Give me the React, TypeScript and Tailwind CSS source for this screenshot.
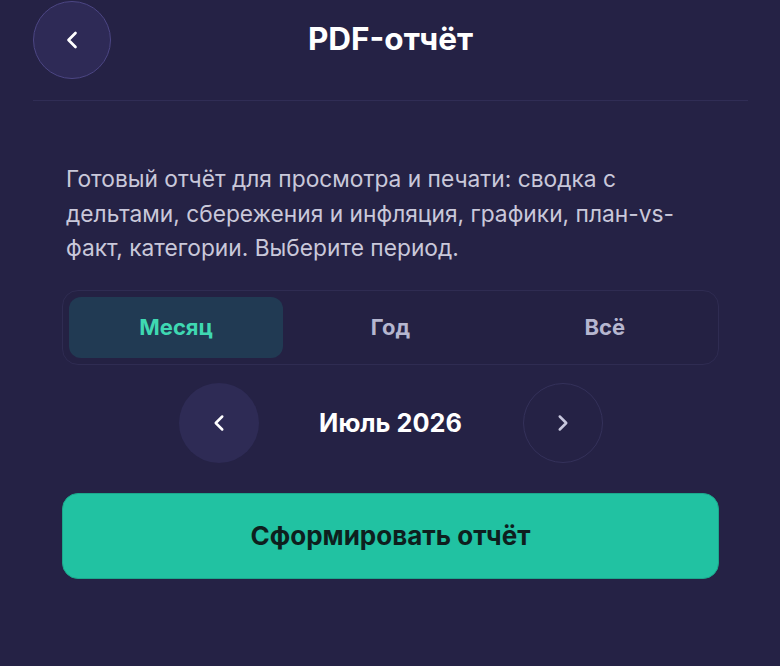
import { ChevronLeft, ChevronRight } from 'lucide-react'
import { useState } from 'react'

const periods = ['Месяц', 'Год', 'Всё']

export default function App() {
  const [period, setPeriod] = useState('Месяц')

  return (
    <div className="min-h-screen w-full bg-[#252245] font-['Inter','Noto_Sans',sans-serif]">
      <div className="mx-[33px] w-[715px]">
        {/* Header */}
        <header className="relative flex h-[101px] items-start justify-center border-b border-[#302d55]">
          <button
            type="button"
            className="absolute left-0 top-px flex h-[78px] w-[78px] items-center justify-center rounded-full border border-[#4c4684] bg-[#2e2a56] text-white"
          >
            <ChevronLeft size={28} strokeWidth={2.3} />
          </button>
          <h1 className="mt-[19px] text-[31.5px] font-bold leading-[40px] text-white">PDF-отчёт</h1>
        </header>

        <main className="px-[29px] pt-[61px]">
          <p className="pl-1 pr-6 text-[22.75px] leading-[34.5px] text-[#c9c8da]">
            Готовый отчёт для просмотра и печати: сводка с дельтами, сбережения и инфляция, графики, план-vs-факт,
            категории. Выберите период.
          </p>

          {/* Period tabs */}
          <div className="mt-[24px] grid grid-cols-3 rounded-2xl border border-[#2f2c52] bg-[#242143] px-[6px] py-[6px]">
            {periods.map((p) => (
              <button
                key={p}
                type="button"
                onClick={() => setPeriod(p)}
                className={
                  period === p
                    ? 'h-[61px] rounded-xl bg-[#213a53] text-[22px] font-bold text-[#3fd8b2]'
                    : 'h-[61px] rounded-xl text-[22px] font-bold text-[#b5b6cf]'
                }
              >
                {p}
              </button>
            ))}
          </div>

          {/* Month switcher */}
          <div className="mt-[18px] flex items-center justify-center">
            <button
              type="button"
              className="flex h-[80px] w-[80px] items-center justify-center rounded-full bg-[#2e2b55] text-white"
            >
              <ChevronLeft size={26} strokeWidth={2.3} />
            </button>
            <div className="w-[264px] whitespace-nowrap text-center text-[25.3px] font-bold text-white">Июль 2026</div>
            <button
              type="button"
              className="flex h-[80px] w-[80px] items-center justify-center rounded-full border border-[#34315a] text-[#c7c7dd]"
            >
              <ChevronRight size={26} strokeWidth={2.3} />
            </button>
          </div>

          <button
            type="button"
            className="mt-[30px] h-[86px] w-full rounded-2xl border border-[#1ba88c] bg-[#21c2a2] text-[26px] font-bold text-[#0e1f1e]"
          >
            Сформировать отчёт
          </button>
        </main>
      </div>
    </div>
  )
}
